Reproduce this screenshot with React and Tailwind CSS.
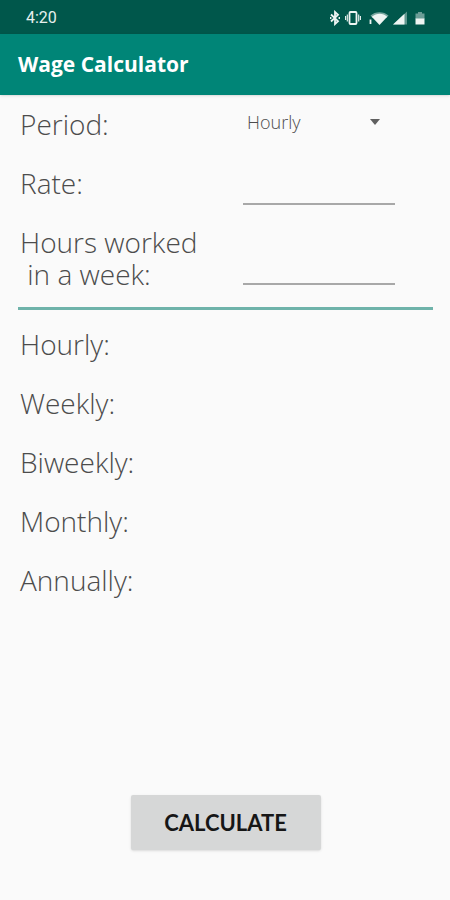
import { useState } from "react";

const RESULTS = [
  { key: "hourly", label: "Hourly:" },
  { key: "weekly", label: "Weekly:" },
  { key: "biweekly", label: "Biweekly:" },
  { key: "monthly", label: "Monthly:" },
  { key: "annually", label: "Annually:" },
];

const WEEKS = { hourly: 0, weekly: 1, biweekly: 2, monthly: 52 / 12, annually: 52 };

function StatusIcons() {
  return (
    <div className="flex items-center text-[#eef5f3]">
      {/* bluetooth */}
      <svg width="12" height="16" viewBox="0 0 12 16" fill="none" stroke="currentColor" strokeWidth="1.8">
        <path d="M2 4.5 9 11.2 6 14V2l3 2.8L2 11.5" />
        <path d="M1 8h1.4M9.6 8H11" />
      </svg>
      {/* vibrate */}
      <svg className="ml-1" width="16" height="16" viewBox="0 0 16 16" fill="none" stroke="currentColor">
        <rect x="4.5" y="2" width="7" height="12" rx="1" strokeWidth="1.8" />
        <path d="M2.3 4.5v7M13.7 4.5v7M.6 6v4M15.4 6v4" strokeWidth="1.1" />
      </svg>
      {/* wifi */}
      <svg className="ml-2" width="20" height="16" viewBox="0 0 20 16">
        <path d="M1.5 5.5C6 1 15 1 19.5 5.5L17.4 8C13 4.2 8 4.2 3.6 8Z" fill="currentColor" opacity=".5" />
        <path d="M2.8 6.8C7.5 2.8 14 2.8 18.2 6.8L10.5 15Z" fill="currentColor" />
        <path d="M1.5 9.5V14" stroke="currentColor" strokeWidth="1.8" />
      </svg>
      {/* signal */}
      <svg className="ml-1" width="14" height="16" viewBox="0 0 14 16">
        <path d="M14 1.5V14.5H0Z" fill="currentColor" opacity=".4" />
        <path d="M11.5 3.8V14.5H0Z" fill="currentColor" />
      </svg>
      {/* battery */}
      <svg className="ml-2" width="10" height="16" viewBox="0 0 10 16" fill="currentColor">
        <path d="M3 2h4v1.5h2.500V9h-9V3.500H3Z" opacity=".45" />
        <path d="M.5 8.500h9v6h-9z" />
      </svg>
    </div>
  );
}

function Row({ className, children }) {
  return <div className={`grid grid-cols-[225fr_152fr_38fr] ${className}`}>{children}</div>;
}

function NumberInput({ id, value, onChange }) {
  return (
    <input
      id={id}
      type="text"
      inputMode="decimal"
      value={value}
      onChange={(e) => onChange(e.target.value)}
      className="h-[38px] w-full min-w-0 border-b-2 border-[#a8a8a8] bg-transparent px-1 text-[18px] outline-none"
    />
  );
}

function App() {
  const [period, setPeriod] = useState("hourly");
  const [rate, setRate] = useState("");
  const [hours, setHours] = useState("");
  const [wages, setWages] = useState(null);

  const handleCalculate = () => {
    const r = parseFloat(rate);
    const h = parseFloat(hours);
    if (!r || !h) return;

    const hourly = period === "hourly" ? r : r / (WEEKS[period] * h);
    const next = { hourly };
    Object.keys(WEEKS).forEach((key) => {
      if (key !== "hourly") next[key] = hourly * h * WEEKS[key];
    });
    setWages(next);
  };

  return (
    <div className="flex min-h-screen flex-col bg-[#fafafa] font-['Open_Sans','Noto_Sans',sans-serif] text-[#4c4c4c]">
      {/* STATUS BAR */}
      <div className="flex h-[34px] items-center justify-between bg-[#00574b] pt-px pr-[25px] pl-[26px]">
        <span className="font-['Roboto',sans-serif] text-[16px] text-[#e6f0ee]">4:20</span>
        <StatusIcons />
      </div>

      {/* HEADER */}
      <header className="flex h-[61px] items-center bg-[#008577] px-[18px] shadow-sm">
        <h1 className="text-[21px] font-bold text-white">Wage Calculator</h1>
      </header>

      <main className="flex flex-1 flex-col pt-[13px] pr-[17px] pb-[50px] pl-[18px] text-[28px] leading-8 font-light">
        {/* INPUTS */}
        <div className="flex flex-col gap-[21px]">
          <Row className="min-h-[38px] items-start">
            <label htmlFor="period" className="pl-0.5">
              Period:
            </label>
            <div className="relative">
              <select
                id="period"
                value={period}
                onChange={(e) => setPeriod(e.target.value)}
                className="block h-7 w-full appearance-none bg-transparent pl-1 text-[18px] leading-6 outline-none"
              >
                <option value="hourly">Hourly</option>
                <option value="weekly">Weekly</option>
                <option value="biweekly">Biweekly</option>
                <option value="monthly">Monthly</option>
                <option value="annually">Annually</option>
              </select>
              <svg
                className="pointer-events-none absolute top-[11px] right-[15px]"
                width="10"
                height="6"
                viewBox="0 0 10 6"
                fill="#606060"
              >
                <path d="M0 0h10L5 6Z" />
              </svg>
            </div>
          </Row>

          <Row className="items-start">
            <label htmlFor="rate" className="pl-0.5">
              Rate:
            </label>
            <NumberInput id="rate" value={rate} onChange={setRate} />
          </Row>

          <Row className="items-end">
            <label htmlFor="hours" className="pl-0.5">
              Hours worked
              <br />
              &nbsp;in a week:
            </label>
            <div className="flex pb-[5px]">
              <NumberInput id="hours" value={hours} onChange={setHours} />
            </div>
          </Row>
        </div>

        <hr className="mt-[17px] mb-[18px] border-t-[3px] border-[#6fb3aa]" />

        {/* RESULTS */}
        <dl className="flex flex-col gap-[27px]">
          {RESULTS.map(({ key, label }) => (
            <div key={key} className="grid grid-cols-[225fr_190fr]">
              <dt className="pl-0.5">{label}</dt>
              <dd>{wages && wages[key].toFixed(2)}</dd>
            </div>
          ))}
        </dl>

        <button
          type="button"
          onClick={handleCalculate}
          className="mt-auto h-[55px] w-[190px] cursor-pointer self-center rounded-xs bg-[#d6d7d7] font-['Lato',sans-serif] text-[22px] font-bold text-[#161616] shadow"
        >
          CALCULATE
        </button>
      </main>
    </div>
  );
}

export default App;
